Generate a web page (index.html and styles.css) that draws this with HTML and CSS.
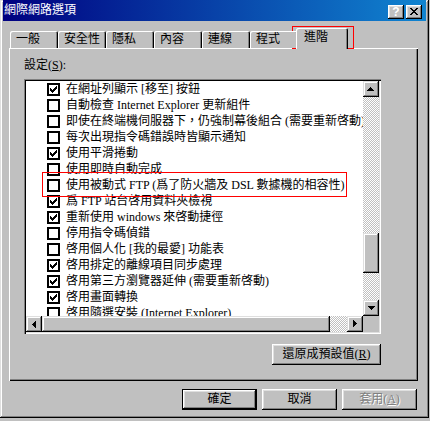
FILE: index.html
```html
<!DOCTYPE html>
<html>
	<head>
		<meta charset="UTF-8">
		<title>網際網路選項</title>
		<link rel="stylesheet" href="styles.css">
	</head>
	<body>
	<svg class="defs" width="0" height="0">
		<defs>
			<symbol id="arr" viewBox="0 0 16 16"><path d="M7 6h1v1h1v1h1v1h1v1h-7v-1h1v-1h1v-1h1z"/></symbol>
			<symbol id="chk" viewBox="0 0 13 13"><path d="M3 5h1v3h-1z M4 6h1v3h-1z M5 7h1v3h-1z M6 6h1v3h-1z M7 5h1v3h-1z M8 4h1v3h-1z M9 3h1v3h-1z"/></symbol>
		</defs>
	</svg>

	<div class="window">
		<!-- 標題列 -->
		<div class="titlebar">
			<span class="title">網際網路選項</span>
			<div class="caption-btns">
				<button class="cap help">?</button>
				<button class="cap">
					<svg width="8" height="7" viewBox="0 0 8 7"><path d="M0 0h2v1h-2z M6 0h2v1h-2z M1 1h2v1h-2z M5 1h2v1h-2z M2 2h4v1h-4z M3 3h2v1h-2z M2 4h4v1h-4z M1 5h2v1h-2z M5 5h2v1h-2z M0 6h2v1h-2z M6 6h2v1h-2z"/></svg>
				</button>
			</div>
		</div>

		<!-- 分頁 -->
		<div class="tabs">
			<span class="tab">一般</span>
			<span class="tab">安全性</span>
			<span class="tab">隱私</span>
			<span class="tab">內容</span>
			<span class="tab">連線</span>
			<span class="tab">程式</span>
			<span class="tab active">進階</span>
		</div>

		<div class="panel">
			<div class="label">設定(<u>S</u>):</div>

			<div class="listbox">
				<ul class="items">
					<li><span class="cb"><svg><use href="#chk"/></svg></span><span>在網址列顯示 [移至] 按鈕</span></li>
					<li><span class="cb"></span><span>自動檢查 Internet Explorer 更新組件</span></li>
					<li><span class="cb"></span><span>即使在終端機伺服器下，仍強制幕後組合 (需要重新啓動)</span></li>
					<li><span class="cb"></span><span>每次出現指令碼錯誤時皆顯示通知</span></li>
					<li><span class="cb"><svg><use href="#chk"/></svg></span><span>使用平滑捲動</span></li>
					<li><span class="cb"></span><span>使用即時自動完成</span></li>
					<li><span class="cb"></span><span>使用被動式 FTP (爲了防火牆及 DSL 數據機的相容性)</span></li>
					<li><span class="cb"><svg><use href="#chk"/></svg></span><span>爲 FTP 站台啓用資料夾檢視</span></li>
					<li><span class="cb"><svg><use href="#chk"/></svg></span><span>重新使用 windows 來啓動捷徑</span></li>
					<li><span class="cb"></span><span>停用指令碼偵錯</span></li>
					<li><span class="cb"></span><span>啓用個人化 [我的最愛] 功能表</span></li>
					<li><span class="cb"><svg><use href="#chk"/></svg></span><span>啓用排定的離線項目同步處理</span></li>
					<li><span class="cb"><svg><use href="#chk"/></svg></span><span>啓用第三方瀏覽器延伸 (需要重新啓動)</span></li>
					<li><span class="cb"><svg><use href="#chk"/></svg></span><span>啓用畫面轉換</span></li>
					<li><span class="cb"></span><span>啓用隨選安裝 (Internet Explorer)</span></li>
				</ul>

				<div class="vscroll">
					<button class="sbtn"><svg class="arrow"><use href="#arr"/></svg></button>
					<div class="track"><div class="thumb vthumb"></div></div>
					<button class="sbtn"><svg class="arrow down"><use href="#arr"/></svg></button>
				</div>

				<div class="hscroll">
					<button class="sbtn"><svg class="arrow left"><use href="#arr"/></svg></button>
					<div class="track"><div class="thumb hthumb"></div></div>
					<button class="sbtn"><svg class="arrow right"><use href="#arr"/></svg></button>
				</div>
				<div class="corner"></div>
			</div>

			<div class="reset">
				<button class="btn wide">還原成預設值(<u>R</u>)</button>
			</div>
		</div>

		<div class="actions">
			<button class="btn default">確定</button>
			<button class="btn">取消</button>
			<button class="btn disabled">套用(<u>A</u>)</button>
		</div>

		<!-- 紅框標示 -->
		<div class="mark mark-tab"></div>
		<div class="mark mark-row"></div>
	</div>
	</body>
</html>
```

FILE: styles.css
```css
body{
    margin:0;
    background:#c0c0c0;
    font:12px "Liberation Serif", "Noto Sans CJK TC", serif;
    color:#000;
}
.defs{
    position:absolute;
    width:0;
    height:0;
}
button{
    border:0;
    padding:0;
    margin:0;
    font:inherit;
    color:inherit;
    background:#c0c0c0;
}

.window{
    position:relative;
    width:429px;
    height:418px;
    box-sizing:border-box;
    padding:0 3px 3px;
    background:#c0c0c0;
    box-shadow:inset -1px -1px #000, inset 1px 1px #dfdfdf, inset -2px -2px #808080, inset 2px 2px #fff;
}

/* 標題列 */
.titlebar{
    display:flex;
    justify-content:space-between;
    height:21px;
    padding:0 4px 0 1px;
    background:linear-gradient(to right, #000080, #1084d0);
    color:#fff;
}
.title{
    line-height:21px;
}
.caption-btns{
    display:flex;
    gap:2px;
    margin-top:5px;
}
.cap{
    display:flex;
    align-items:center;
    justify-content:center;
    width:16px;
    height:14px;
    box-shadow:inset -1px -1px #000, inset 1px 1px #fff, inset -2px -2px #808080, inset 2px 2px #dfdfdf;
}
.cap svg{
    margin-top:-1px;
}
.help{
    font:bold 12px "Liberation Sans", sans-serif;
    line-height:14px;
}

/* 分頁 */
.tabs{
    position:relative;
    z-index:1;
    display:flex;
    align-items:flex-end;
    height:21px;
    margin:7px 0 -1px 7px;
}
.tab{
    width:48px;
    height:17px;
    box-sizing:border-box;
    margin-bottom:1px;
    padding:1px 0 0 6px;
    line-height:14px;
    background:#c0c0c0;
    border-radius:2px 2px 0 0;
    box-shadow:inset 1px 1px #fff, inset -1px 0 #000, inset -2px 0 #808080;
}
.tab.active{
    width:52px;
    height:21px;
    margin:0 0 0 -2px;
    padding:2px 0 0 8px;
}

/* 面板 */
.panel{
    width:409px;
    height:333px;
    box-sizing:border-box;
    margin-left:6px;
    padding:10px 37px 0 15px;
    box-shadow:inset 1px 1px #fff, inset -1px -1px #000, inset -2px -2px #808080;
}
.label{
    line-height:14px;
}

.listbox{
    display:grid;
    grid-template-columns:1fr 16px;
    grid-template-rows:1fr 16px;
    height:255px;
    box-sizing:border-box;
    margin-top:7px;
    padding:2px;
    background:#fff;
    box-shadow:inset 1px 1px #808080, inset 2px 2px #000, inset -1px -1px #fff, inset -2px -2px #dfdfdf;
}
.items{
    list-style:none;
    margin:0;
    padding:0 0 0 21px;
    overflow:hidden;
}
.items li{
    display:flex;
    align-items:flex-start;
    gap:6px;
    height:16px;
    line-height:16px;
    white-space:nowrap;
}
.cb{
    flex:none;
    width:13px;
    height:13px;
    box-sizing:border-box;
    margin-top:2px;
    border:2px solid #000;
    background:#fff;
}
.cb svg{
    display:block;
    width:13px;
    height:13px;
    margin:-2px;
}

/* 捲軸 */
.vscroll{
    display:flex;
    flex-direction:column;
}
.hscroll{
    display:flex;
}
.track{
    flex:1;
    background:repeating-conic-gradient(#c0c0c0 0 25%, #fff 0 50%) 0 0/2px 2px;
}
.sbtn{
    flex:none;
    width:16px;
    height:16px;
    box-shadow:inset -1px -1px #000, inset 1px 1px #dfdfdf, inset -2px -2px #808080, inset 2px 2px #fff;
}
.arrow{
    display:block;
    width:16px;
    height:16px;
}
.arrow.down{
    transform:rotate(180deg);
}
.arrow.left{
    transform:rotate(-90deg);
}
.arrow.right{
    transform:rotate(90deg);
}
.thumb{
    background:#c0c0c0;
    box-shadow:inset -1px -1px #000, inset 1px 1px #dfdfdf, inset -2px -2px #808080, inset 2px 2px #fff;
}
.vthumb{
    height:40px;
    margin-top:136px;
}
.hthumb{
    width:288px;
    height:16px;
}
.corner{
    background:#c0c0c0;
}

/* 按鈕 */
.btn{
    width:75px;
    height:21px;
    text-align:center;
    line-height:21px;
    box-shadow:inset -1px -1px #000, inset 1px 1px #fff, inset -2px -2px #808080, inset 2px 2px #dfdfdf;
}
.btn.wide{
    width:109px;
}
.btn.default{
    box-shadow:inset 0 0 0 1px #000, inset -2px -2px #000, inset 2px 2px #fff, inset -3px -3px #808080, inset 3px 3px #dfdfdf;
}
.btn.disabled{
    color:#808080;
    text-shadow:1px 1px #fff;
}
.reset{
    display:flex;
    justify-content:flex-end;
    margin-top:10px;
}
.actions{
    display:flex;
    justify-content:flex-end;
    gap:5px;
    width:409px;
    box-sizing:border-box;
    margin:8px 0 0 6px;
    padding-right:1px;
}

/* 紅框 */
.mark{
    position:absolute;
    border:1px solid #f00;
}
.mark-tab{
    left:292px;
    top:26px;
    width:60px;
    height:21px;
}
.mark-row{
    left:42px;
    top:172px;
    width:303px;
    height:23px;
}
```
